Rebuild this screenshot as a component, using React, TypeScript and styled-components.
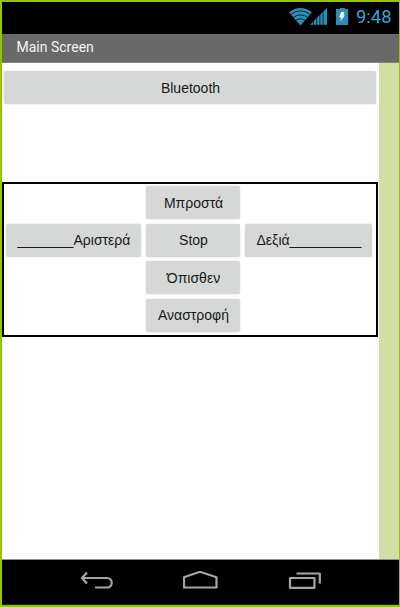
import React from "react";
import styled, { createGlobalStyle } from "styled-components";

const GlobalStyle = createGlobalStyle`
  * { box-sizing: border-box; }
  body { margin: 0; background: #fff; }
`;

const Phone = styled.div`
  width: 400px;
  height: 607px;
  display: flex;
  flex-direction: column;
  border: 2px solid #94c30a;
  border-right-width: 1px;
  background: #fff;
  overflow: hidden;
`;

const StatusBar = styled.header`
  height: 32px;
  flex: none;
  display: flex;
  align-items: center;
  justify-content: flex-end;
  padding-right: 7px;
  background: #000;
`;

const StatusIcons = styled.svg`
  display: block;
  flex: none;
  margin-right: 8px;
`;

const Clock = styled.span`
  width: 36px;
  padding-bottom: 2px;
  font: 18.4px/28px Roboto, sans-serif;
  color: #31a5d5;
  white-space: nowrap;
`;

const TitleBar = styled.div`
  height: 29px;
  flex: none;
  padding-left: 14.5px;
  background: #696969;
  border-bottom: 1px solid #858585;
  color: #f4f4f4;
  font: 14px/27px Roboto, sans-serif;
`;

const Main = styled.main`
  flex: 1;
  display: flex;
  min-height: 0;
`;

const Content = styled.div`
  width: 376.7px;
  flex: none;
`;

const Scroller = styled.div`
  flex: 1;
  background: #d1dfa3;
`;

const Button = styled.button<{ $area?: string }>`
  display: flex;
  align-items: center;
  justify-content: center;
  height: 33px;
  padding: 0 0 0 1px;
  border: 0;
  border-radius: 2px;
  background: #d6d8d7;
  box-shadow: 0 0 2px rgba(0, 0, 0, 0.17);
  color: #181818;
  font: 14px/16px "Liberation Sans", Arial, sans-serif;
  white-space: pre;
  ${(p) => p.$area && `grid-area: ${p.$area};`}
`;

const Blank = styled.span`
  letter-spacing: 0.2px;
`;

const ConnectRow = styled.div`
  height: 119px;
  padding: 8px 2.7px 0 2px;

  ${Button} {
    width: 100%;
  }
`;

const ControlGrid = styled.section`
  width: 376px;
  height: 155px;
  display: grid;
  grid-template-columns: 135px 94px 127px;
  grid-template-rows: repeat(4, 33px);
  grid-template-areas:
    ". forward ."
    "left stop right"
    ". back ."
    ". reverse .";
  column-gap: 5px;
  row-gap: 4.6px;
  padding: 2px 0 0 2px;
  border: 2px solid #000;
`;

const NavBar = styled.nav`
  height: 46px;
  flex: none;
  display: flex;
  align-items: center;
  padding-left: 78px;
  gap: 69px;
  background: #000;
  border-top: 1px solid #8a8d8e;
  border-bottom: 1px solid #1c2208;

  svg {
    display: block;
    flex: none;
    fill: none;
    stroke: #a5a5a5;
    stroke-width: 2.2;
  }
`;

const controls = [
  { area: "forward", label: "Μπροστά" },
  { area: "left", before: "_______", label: "Αριστερά" },
  { area: "stop", label: "Stop" },
  { area: "right", label: "Δεξιά", after: "_________" },
  { area: "back", label: "Όπισθεν" },
  { area: "reverse", label: "Αναστροφή" },
];

export default function App() {
  return (
    <>
      <GlobalStyle />
      <Phone>
        <StatusBar>
          <StatusIcons width="60" height="20" viewBox="288 8 60 20">
            <g fill="#2e8db6">
              <path d="M289 12.3Q300.5 3.8 312 12.3L300.5 25.5Z" />
              <path d="M310 24.8L327 7.8V24.8Z" />
              <path d="M336 9H340V8H345V9H348V25H336Z" />
            </g>
            <g fill="none" stroke="#052433" strokeWidth="1">
              <path d="M290.5 14.5Q300.5 7.2 310.5 14.5" />
              <path d="M293 17.6Q300.5 12.2 308 17.6" />
              <path d="M295.5 20.6Q300.5 17 305.5 20.6" />
            </g>
            <path
              d="M313.5 20V25M316.7 17V25M319.9 14V25M323.1 11V25"
              stroke="#052433"
              strokeWidth=".9"
            />
            <path d="M341 12H344.5L343.6 15.5H345L340.2 21.5L341.3 17.4H339Z" fill="#e6f6fb" />
          </StatusIcons>
          <Clock>9:48</Clock>
        </StatusBar>
        <TitleBar>Main Screen</TitleBar>
        <Main>
          <Content>
            <ConnectRow>
              <Button>Bluetooth</Button>
            </ConnectRow>
            <ControlGrid>
              {controls.map(({ area, before, label, after }) => (
                <Button key={area} $area={area}>
                  {before && <Blank>{before}</Blank>}
                  {label}
                  {after && <Blank>{after}</Blank>}
                </Button>
              ))}
            </ControlGrid>
          </Content>
          <Scroller />
        </Main>
        <NavBar>
          <svg width="34" height="22" viewBox="80 571 34 22">
            <path d="M87 572.5L82 578L87 583.5M82.5 578H107C113.3 578 113.3 587.5 107 587.5H95" />
          </svg>
          <svg width="36" height="22" viewBox="183 571 36 22">
            <path d="M184 577.2L200 571.8L216.5 577.2V587.5H184Z" strokeLinejoin="round" />
          </svg>
          <svg width="34" height="22" viewBox="288 571 34 22">
            <path d="M290 578H314.5V587.8H290ZM296.5 573.5H319.8V583.5" strokeLinejoin="round" />
          </svg>
        </NavBar>
      </Phone>
    </>
  );
}
